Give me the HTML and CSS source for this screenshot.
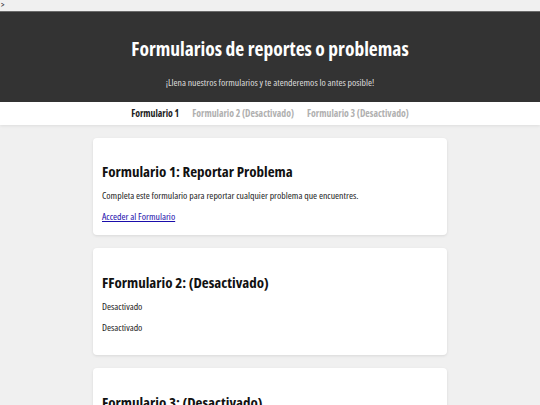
FILE: index.html
```html
<!DOCTYPE html>
<html lang="es">
<head>
<meta charset="utf-8">
<title>Formularios</title>
<link rel="stylesheet" href="styles.css">
</head>
<body>
<div class="stray">&gt;</div>
<header class="hero">
  <h1 class="hero-title">Formularios de reportes o problemas</h1>
  <p class="hero-sub">¡Llena nuestros formularios y te atenderemos lo antes posible!</p>
</header>
<nav class="tabs">
  <span class="tab active">Formulario 1</span>
  <span class="tab">Formulario 2 (Desactivado)</span>
  <span class="tab">Formulario 3 (Desactivado)</span>
</nav>
<main class="content">
  <section class="card card-open">
    <h2 class="card-title">Formulario 1: Reportar Problema</h2>
    <p class="card-text">Completa este formulario para reportar cualquier problema que encuentres.</p>
    <p class="card-text"><a href="#" class="card-link">Acceder al Formulario</a></p>
  </section>
  <section class="card">
    <h2 class="card-title">FFormulario 2: (Desactivado)</h2>
    <p class="card-text">Desactivado</p>
    <p class="card-text">Desactivado</p>
  </section>
  <section class="card">
    <h2 class="card-title">Formulario 3: (Desactivado)</h2>
    <p class="card-text">Desactivado</p>
    <p class="card-text">Desactivado</p>
  </section>
</main>
</body>
</html>
```
FILE: styles.css
```css
html, body {
  margin: 0;
  padding: 0;
}
body {
  background: #f0f0f0;
  font-family: "Open Sans", "DejaVu Sans", sans-serif;
  font-stretch: 75%;
  color: #222;
}
.stray {
  height: 11px;
  font-size: 8px;
  line-height: 9px;
  padding-left: 1px;
  color: #222;
}
.hero {
  background: #333333;
  color: #fff;
  text-align: center;
  height: 91px;
  display: flex;
  flex-direction: column;
  align-items: center;
  border-top: 1px solid #6a6a6a;
  box-sizing: border-box;
}
.hero-title {
  margin: 24px 0 0;
  font-size: 19.5px;
  font-weight: bold;
  line-height: 26px;
}
.hero-sub {
  margin: 14px 0 0;
  font-size: 9.75px;
  line-height: 13px;
  color: #dddddd;
}
.tabs {
  background: #fff;
  height: 23px;
  display: flex;
  justify-content: center;
  align-items: center;
  gap: 13px;
  box-shadow: 0 1px 3px rgba(0,0,0,0.08);
}
.tab {
  font-size: 9.75px;
  font-weight: bold;
  color: #b0b0b0;
}
.tab.active {
  color: #222;
}
.content {
  width: 354px;
  margin: 13px auto 0;
  display: flex;
  flex-direction: column;
  gap: 13px;
}
.card {
  background: #fff;
  border-radius: 4px;
  box-shadow: 0 1px 3px rgba(0,0,0,0.1);
  padding: 24px 9px 21px;
}
.card-open {
  padding-top: 23px;
  padding-bottom: 12px;
}
.card-title {
  margin: 0 0 8px;
  font-size: 15px;
  line-height: 20px;
  color: #111;
}
.card-text {
  margin: 0 0 8px;
  font-size: 9.75px;
  line-height: 13px;
  color: #222;
}
.card-text:last-child {
  margin-bottom: 0;
}
.card-link {
  color: #1a0dab;
}
```
